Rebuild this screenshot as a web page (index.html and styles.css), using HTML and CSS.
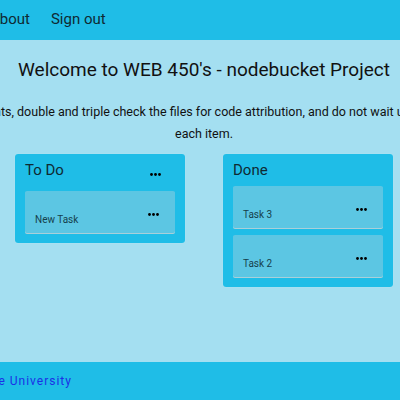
FILE: index.html
```html
<!DOCTYPE html>
<html lang="en">
<head>
<meta charset="utf-8">
<title>nodebucket</title>
<link rel="stylesheet" href="styles.css">
</head>
<body>
<div class="page">
  <header class="toolbar">
    <nav class="nav">
      <a class="nav-link" href="#">About</a>
      <a class="nav-link" href="#">Sign out</a>
    </nav>
  </header>
  <main class="main">
    <h1 class="title">Welcome to WEB 450's - nodebucket Project</h1>
    <p class="intro">Remember to read requirements, double and triple check the files for code attribution, and do not wait until the last minute to complete each item.</p>
    <div class="board">
      <section class="column">
        <div class="column-head">
          <h2 class="column-title">To Do</h2>
          <span class="menu menu-head"><svg width="11" height="3" viewBox="0 0 11 3"><circle cx="1.5" cy="1.5" r="1.4"/><circle cx="5.5" cy="1.5" r="1.4"/><circle cx="9.5" cy="1.5" r="1.4"/></svg></span>
        </div>
        <div class="task">
          <span class="task-text">New Task</span>
          <span class="menu"><svg width="11" height="3" viewBox="0 0 11 3"><circle cx="1.5" cy="1.5" r="1.4"/><circle cx="5.5" cy="1.5" r="1.4"/><circle cx="9.5" cy="1.5" r="1.4"/></svg></span>
        </div>
      </section>
      <section class="column">
        <div class="column-head">
          <h2 class="column-title">Done</h2>
        </div>
        <div class="task">
          <span class="task-text">Task 3</span>
          <span class="menu"><svg width="11" height="3" viewBox="0 0 11 3"><circle cx="1.5" cy="1.5" r="1.4"/><circle cx="5.5" cy="1.5" r="1.4"/><circle cx="9.5" cy="1.5" r="1.4"/></svg></span>
        </div>
        <div class="task">
          <span class="task-text">Task 2</span>
          <span class="menu"><svg width="11" height="3" viewBox="0 0 11 3"><circle cx="1.5" cy="1.5" r="1.4"/><circle cx="5.5" cy="1.5" r="1.4"/><circle cx="9.5" cy="1.5" r="1.4"/></svg></span>
        </div>
      </section>
    </div>
  </main>
  <footer class="footer">
    <span class="footer-text">Bellevue University</span>
  </footer>
</div>
</body>
</html>
```

FILE: styles.css
```css
html, body {
  margin: 0;
  padding: 0;
  overflow: hidden;
  background: #a4dff1;
}

body {
  font-family: Roboto, "Noto Sans", sans-serif;
  color: #111;
}

.page {
  width: 800px;
  margin-left: -196px;
  height: 400px;
  display: flex;
  flex-direction: column;
}

.toolbar {
  height: 40px;
  background: #1fbde7;
  display: flex;
  align-items: center;
  padding-left: 186px;
  box-sizing: border-box;
  padding-bottom: 2px;
}

.nav {
  display: flex;
  gap: 21px;
}

.nav-link {
  font-size: 15px;
  color: #0f2a33;
  text-decoration: none;
}

.main {
  flex: 1;
  display: flex;
  flex-direction: column;
  align-items: center;
}

.title {
  margin: 18px 0 0;
  font-size: 19px;
  line-height: 23px;
  font-weight: 400;
  color: #111;
}

.intro {
  margin: 20px 0 0;
  width: 752px;
  font-size: 12.5px;
  line-height: 22px;
  text-align: center;
  color: #111;
}

.board {
  margin-top: 9px;
  display: flex;
  gap: 38px;
  align-items: flex-start;
}

.column {
  width: 170px;
  box-sizing: border-box;
  background: #1fbde7;
  border-radius: 3px;
  padding: 7px 10px 10px;
  box-shadow: 0 0 1px rgba(255, 255, 255, 0.5);
}

.column-head {
  display: flex;
  justify-content: space-between;
  align-items: flex-start;
  margin-bottom: 7px;
}

.column-title {
  margin: 0;
  font-size: 15px;
  line-height: 18px;
  font-weight: 400;
  color: #0f2a33;
}

.menu {
  display: flex;
}

.menu svg {
  fill: #000;
}

.menu-head {
  height: 23px;
  box-sizing: border-box;
  padding-top: 12px;
  margin-right: 14px;
}

.task {
  height: 42px;
  box-sizing: border-box;
  background: #5cc6e3;
  border-radius: 2px;
  padding: 22px 16px 0 10px;
  display: flex;
  justify-content: space-between;
  align-items: flex-start;
  box-shadow: 0 1px 0 #a9cfd9;
  margin-bottom: 7px;
}

.task:last-child {
  margin-bottom: 0;
}

.task-text {
  font-size: 10px;
  line-height: 12px;
  margin-top: 1px;
  color: #163f4c;
}

.footer {
  height: 38px;
  background: #1fbde7;
  display: flex;
  align-items: center;
  padding-left: 149px;
  box-sizing: border-box;
}

.footer-text {
  font-size: 12px;
  letter-spacing: 1px;
  color: #1c30e6;
}
```
